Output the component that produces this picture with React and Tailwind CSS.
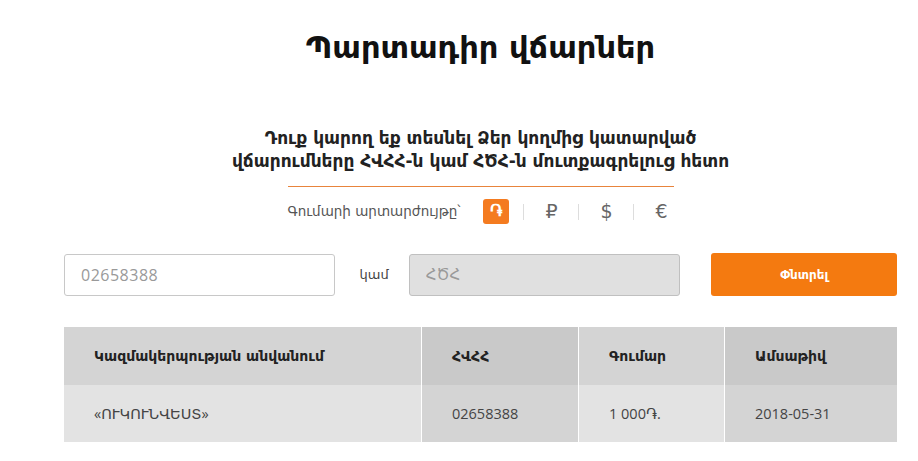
import { useState } from "react";

const rows = [
    { name: "«ՈՒԿՈՒՆՎԵՍՏ»", tin: "02658388", amount: "1 000֏.", date: "2018-05-31" },
];

export default function App() {
    const [currency, setCurrency] = useState("amd");

    const currencies = [
        { id: "amd", label: "֏" },
        { id: "rub", label: "₽" },
        { id: "usd", label: "$" },
        { id: "eur", label: "€" },
    ];

    return (
        <div className="w-[918px] h-[461px] bg-white overflow-hidden font-['DejaVu_Sans',sans-serif]">
            <div className="w-[833px] ml-[64px] flex flex-col items-center">

                {/* TITLE */}
                <h1 className="mt-[28px] text-[30.5px] leading-[40px] font-bold text-[#111]">
                    Պարտադիր վճարներ
                </h1>

                {/* SUBTITLE */}
                <p className="mt-[59px] text-[17px] leading-[23px] font-bold text-[#222] text-center">
                    Դուք կարող եք տեսնել Ձեր կողմից կատարված
                    <br />
                    վճարումները ՀՎՀՀ-ն կամ ՀԾՀ-ն մուտքագրելուց հետո
                </p>

                <div className="mt-[13px] w-[386px] h-px bg-[#e8843c]" />

                {/* CURRENCY SWITCH */}
                <div className="mt-[12px] w-[386px] flex items-center whitespace-nowrap text-[13.5px] text-[#555]">
                    <span className="mr-[23px] shrink-0">Գումարի արտարժույթը՝</span>
                    {currencies.map((c, i) => (
                        <div key={c.id} className="flex items-center shrink-0">
                            {i > 0 && <div className="w-px h-[16px] bg-[#ddd] mx-[14px]" />}
                            <button
                                onClick={() => setCurrency(c.id)}
                                className={
                                    currency === c.id
                                        ? "w-[26px] h-[25px] rounded-[3px] bg-[#f47b20] text-white text-[17px] font-bold flex items-center justify-center"
                                        : "w-[26px] h-[25px] text-[#666] text-[19px] flex items-center justify-center"
                                }
                            >
                                {c.label}
                            </button>
                        </div>
                    ))}
                </div>

                {/* SEARCH ROW */}
                <div className="mt-[29px] w-full flex items-center">
                    <input
                        placeholder="02658388"
                        className="w-[271px] h-[42px] px-[16px] border border-[#c8c8c8] rounded-[3px] bg-white text-[16px] tracking-[0.5px] placeholder:text-[#999] font-['Open_Sans','DejaVu_Sans',sans-serif] outline-none"
                    />
                    <span className="ml-[25px] mr-[20px] text-[13px] text-[#444]">կամ</span>
                    <input
                        placeholder="ՀԾՀ"
                        className="w-[272px] h-[42px] px-[16px] border border-[#c0c0c0] rounded-[3px] bg-[#e0e0e0] text-[15px] placeholder:text-[#999] outline-none"
                    />
                    <button className="ml-[31px] w-[186px] h-[43px] rounded-[3px] bg-[#f47a10] text-white text-[12px] font-bold">
                        Փնտրել
                    </button>
                </div>

                {/* TABLE */}
                <div className="mt-[31px] w-full text-[14px]">
                    <div className="grid grid-cols-[357px_156px_145px_172px] gap-x-px h-[58px] font-bold text-[#222]">
                        <div className="bg-[#d4d4d4] pl-[30px] flex items-center">Կազմակերպության անվանում</div>
                        <div className="bg-[#c9c9c9] pl-[30px] flex items-center">ՀՎՀՀ</div>
                        <div className="bg-[#d4d4d4] pl-[30px] flex items-center">Գումար</div>
                        <div className="bg-[#c9c9c9] pl-[30px] flex items-center">Ամսաթիվ</div>
                    </div>
                    {rows.map((r, i) => (
                        <div key={i} className="grid grid-cols-[357px_156px_145px_172px] gap-x-px h-[57px] text-[14.5px] text-[#444] font-['Open_Sans','DejaVu_Sans',sans-serif]">
                            <div className="bg-[#e3e3e3] pl-[30px] flex items-center">{r.name}</div>
                            <div className="bg-[#d4d4d4] pl-[30px] flex items-center">{r.tin}</div>
                            <div className="bg-[#e3e3e3] pl-[30px] flex items-center">{r.amount}</div>
                            <div className="bg-[#d4d4d4] pl-[30px] flex items-center">{r.date}</div>
                        </div>
                    ))}
                </div>
            </div>
        </div>
    );
}
